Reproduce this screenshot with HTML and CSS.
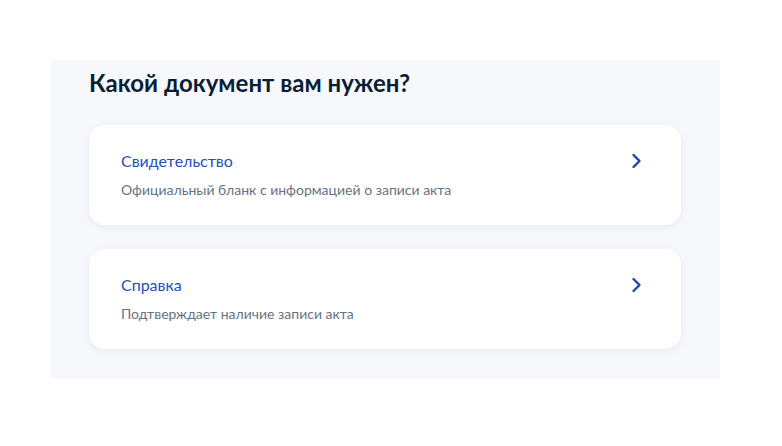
FILE: index.html
```html
<!DOCTYPE html>
<html lang="ru">
<head>
<meta charset="utf-8">
<link rel="stylesheet" href="styles.css">
</head>
<body>
<div class="page">
  <section class="panel">
    <h1 class="heading">Какой документ вам нужен?</h1>
    <div class="cards">
      <a class="card" href="#">
        <div class="card-text">
          <div class="card-title">Свидетельство</div>
          <div class="card-sub">Официальный бланк с информацией о записи акта</div>
        </div>
        <svg class="chev" width="24" height="24" viewBox="0 0 24 24"><path d="M8.5 6 L14.5 12 L8.5 18" fill="none" stroke="currentColor" stroke-width="2.4" stroke-linecap="round" stroke-linejoin="round"/></svg>
      </a>
      <a class="card" href="#">
        <div class="card-text">
          <div class="card-title">Справка</div>
          <div class="card-sub">Подтверждает наличие записи акта</div>
        </div>
        <svg class="chev" width="24" height="24" viewBox="0 0 24 24"><path d="M8.5 6 L14.5 12 L8.5 18" fill="none" stroke="currentColor" stroke-width="2.4" stroke-linecap="round" stroke-linejoin="round"/></svg>
      </a>
    </div>
  </section>
</div>
</body>
</html>
```

FILE: styles.css
```css
html, body {
  margin: 0;
  padding: 0;
  background: #ffffff;
  font-family: Lato, "Liberation Sans", sans-serif;
}
.page {
  padding: 60px 0 0 50px;
}
.panel {
  width: 670px;
  box-sizing: border-box;
  background: #f6f8fc;
  padding: 7px 39px 30px 39px;
}
.heading {
  margin: 0 0 26px 0;
  font-size: 24px;
  line-height: 32px;
  font-weight: 700;
  color: #0b1f33;
}
.cards {
  display: flex;
  flex-direction: column;
  gap: 24px;
}
.card {
  display: flex;
  align-items: flex-start;
  justify-content: space-between;
  height: 100px;
  box-sizing: border-box;
  padding: 24px 32px 0 32px;
  background: #ffffff;
  border-radius: 16px;
  box-shadow: 0 2px 10px rgba(11, 31, 51, 0.06);
  text-decoration: none;
}
.card-title {
  font-size: 16px;
  line-height: 24px;
  color: #2550b8;
}
.card-sub {
  margin-top: 7px;
  font-size: 14px;
  line-height: 20px;
  color: #66727f;
}
.chev {
  margin-top: 0px;
  color: #1a47a8;
  flex: none;
}
```
